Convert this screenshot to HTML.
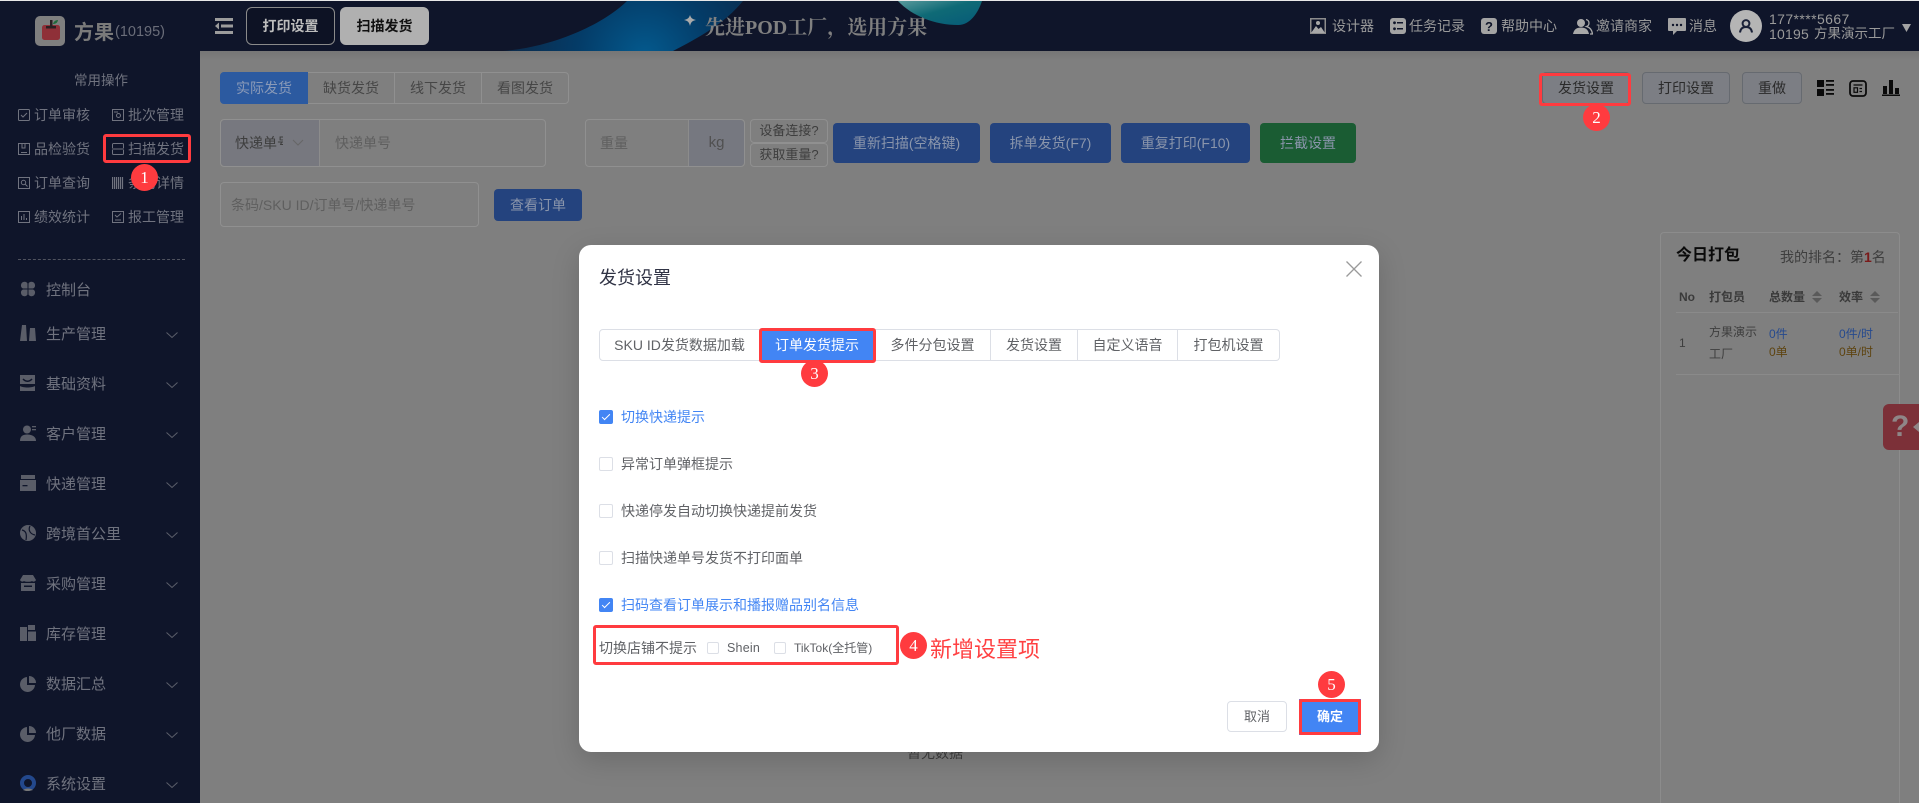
<!DOCTYPE html>
<html lang="zh"><head><meta charset="utf-8"><title>发货设置</title>
<style>
*{box-sizing:border-box}
html,body{margin:0;padding:0;width:1919px;height:803px;overflow:hidden;background:#7f7f7f;font-family:"Liberation Sans","Noto Sans CJK SC",sans-serif}
.a{position:absolute}
.t{position:absolute;white-space:nowrap;line-height:20px;height:20px;font-size:14px}
.c{text-align:center}
.side{color:#70737f}
.tb{top:72px;height:32px;border:1px solid #909090;line-height:30px;text-align:center;font-size:14px;color:#464646;position:absolute}
.bb{position:absolute;top:123px;height:40px;line-height:40px;background:#24437e;color:#8a95ab;border-radius:4px;text-align:center;font-size:14px}
.box{position:absolute;border:1px solid #909090;border-radius:4px}
.rb{position:absolute;top:72px;height:32px;border:1px solid #666a70;border-radius:4px;background:#7c7e84;color:#2a2a2a;text-align:center;line-height:30px;font-size:14px}
.mt{position:absolute;top:329px;height:32px;border:1px solid #dcdfe6;border-left:0;line-height:30px;text-align:center;font-size:14px;color:#606266;background:#fff}
.ck{position:absolute;left:599px;width:14px;height:14px;border:1px solid #dcdfe6;border-radius:2px;background:#fff}
.ck.on{background:#4285f4;border-color:#4285f4}
.ck.on:after{content:"";position:absolute;left:4px;top:1px;width:3px;height:7px;border:solid #fff;border-width:0 1px 1px 0;transform:rotate(45deg)}
.ml{position:absolute;left:621px;font-size:14px;line-height:20px;height:20px;white-space:nowrap;color:#606266}
.badge{position:absolute;width:27px;height:27px;border-radius:50%;background:#ff3b3f;color:#fff;text-align:center;line-height:27px;font-size:17px;font-family:"Liberation Serif",serif;z-index:10}
.red{position:absolute;border:3px solid #ff3b3f;border-radius:3px;z-index:9}
.chev{position:absolute;left:166px;width:12px;height:12px}
svg{position:absolute;display:block}
</style></head><body>

<div class="a" style="left:0;top:0;width:1919px;height:1px;background:#e8e8e8"></div>
<div class="a" style="left:0;top:1px;width:1919px;height:50px;background:#0f152a;overflow:hidden">
<svg width="1919" height="50" style="left:0;top:0">
<defs>
<radialGradient id="g1" gradientUnits="userSpaceOnUse" cx="645" cy="56" r="150"><stop offset="0" stop-color="#045a8e"/><stop offset=".45" stop-color="#043c68"/><stop offset="1" stop-color="#0d2745"/></radialGradient>
<linearGradient id="g2" x1="0" y1="0" x2="1" y2="1"><stop offset="0" stop-color="#5a9a9c"/><stop offset=".45" stop-color="#0f6a76"/><stop offset="1" stop-color="#065a78"/></linearGradient></defs>
<path d="M503 50C555 46 605 22 627 0H743C725 22 700 36 673 50Z" fill="url(#g1)"/>
<path d="M898 0C912 15 935 24 958 24C970 24 978 12 982 0Z" fill="url(#g2)"/>
<path d="M690 14C691 17 692 18 696 19C692 20 691 21 690 25C689 21 688 20 684 19C688 18 689 17 690 14Z" fill="#aaaaaa"/>
</svg>
</div>
<div class="a" style="left:0;top:51px;width:200px;height:752px;background:#0f152a"></div>
<div class="a" style="left:200px;top:51px;width:1719px;height:10px;background:linear-gradient(#767676,#7f7f7f)"></div>

<!-- logo -->
<div class="a" style="left:35px;top:16px;width:30px;height:30px;border-radius:5px;background:#7f7f7f"></div>
<svg width="30" height="30" style="left:35px;top:16px"><rect x="7" y="9" width="18" height="15" rx="2.500" fill="#8f3038"/><rect x="15" y="4" width="2.500" height="8" fill="#2b1f22"/><rect x="11" y="10" width="10" height="2.500" fill="#2b1f22"/><path d="M18 8C18.500 6 20 4 23 4C22.500 7 20.500 8 18 8Z" fill="#1f6a3a"/></svg>
<div class="t" style="left:74px;top:21px;font-size:20px;line-height:24px;height:24px;font-weight:700;color:#7a7a7a">方果</div>
<div class="t" style="left:115px;top:21px;font-size:14.500px;line-height:22px;color:#6a6d79">(10195)</div>

<svg width="18" height="16" style="left:215px;top:18px"><rect x="0" y="0" width="18" height="3" fill="#9c9c9c"/><rect x="6" y="6.500" width="12" height="3" fill="#9c9c9c"/><rect x="0" y="13" width="18" height="3" fill="#9c9c9c"/><path d="M4 4.500L0 8L4 11.500Z" fill="#9c9c9c"/></svg>
<div class="a c" style="left:246px;top:7px;width:89px;height:38px;border:1px solid #8a8a8a;border-radius:6px;background:#0d1224;color:#bdbdbd;font-size:14px;font-weight:700;line-height:36px">打印设置</div>
<div class="a c" style="left:340px;top:7px;width:89px;height:38px;border-radius:6px;background:#b0b0b0;color:#111;font-size:14px;font-weight:700;line-height:38px">扫描发货</div>

<div class="t" style="left:705px;top:14px;height:28px;line-height:28px;font-size:20px;font-weight:700;color:#808080;font-family:'Liberation Serif','Noto Serif CJK SC',serif">先进POD工厂，选用方果</div>

<!-- header right -->
<svg width="16" height="16" style="left:1310px;top:18px"><rect x=".75" y=".75" width="14.500" height="14.500" fill="#0f152a" stroke="#8c8c8c" stroke-width="1.500"/><circle cx="8" cy="5" r="2" fill="#a8a8a8"/><path d="M1 15L6 8L8.500 11L11 9L15 15Z" fill="#a8a8a8"/></svg>
<div class="t" style="left:1332px;top:16px;color:#9a9a9a">设计器</div>
<svg width="16" height="16" style="left:1390px;top:18px"><rect width="16" height="16" rx="3" fill="#a3a3a3"/><rect x="7" y="4" width="6" height="1.500" fill="#0f152a"/><rect x="7" y="10" width="6" height="1.500" fill="#0f152a"/><circle cx="4.500" cy="4.800" r="1.400" fill="#0f152a"/><circle cx="4.500" cy="10.800" r="1.400" fill="#0f152a"/></svg>
<div class="t" style="left:1409px;top:16px;color:#9a9a9a">任务记录</div>
<svg width="16" height="16" style="left:1481px;top:18px"><rect width="16" height="16" rx="3" fill="#a3a3a3"/><text x="8" y="13" font-size="13" font-weight="700" text-anchor="middle" fill="#0f152a" font-family="Liberation Sans">?</text></svg>
<div class="t" style="left:1501px;top:16px;color:#9a9a9a">帮助中心</div>
<svg width="20" height="17" style="left:1573px;top:18px"><circle cx="8" cy="5" r="4" fill="#a8a8a8"/><path d="M0 16C1 11 4 9.500 8 9.500C12 9.500 15 11 16 16Z" fill="#a8a8a8"/><path d="M13 1.500C15 2 16 3.500 16 5C16 6.500 15 8 13.500 8.500C17 9.500 19 12 19.500 16H17" fill="none" stroke="#a8a8a8" stroke-width="1.300"/></svg>
<div class="t" style="left:1596px;top:16px;color:#9a9a9a">邀请商家</div>
<svg width="18" height="17" style="left:1668px;top:18px"><path d="M1 0H17A1 1 0 0 1 18 1V12A1 1 0 0 1 17 13H9L5 17V13H1A1 1 0 0 1 0 12V1A1 1 0 0 1 1 0Z" fill="#a3a3a3"/><circle cx="5" cy="7" r="1.200" fill="#0f152a"/><circle cx="9" cy="7" r="1.200" fill="#0f152a"/><circle cx="13" cy="7" r="1.200" fill="#0f152a"/></svg>
<div class="t" style="left:1689px;top:16px;color:#9a9a9a">消息</div>
<div class="a" style="left:1730px;top:10px;width:32px;height:32px;border-radius:50%;background:#b5b5b5"></div>
<svg width="14" height="14" style="left:1739px;top:19px"><circle cx="7" cy="4.500" r="3.400" fill="none" stroke="#1a2138" stroke-width="2"/><path d="M1 13.500C1.500 9.500 4 8 7 8C10 8 12.500 9.500 13 13.500" fill="none" stroke="#1a2138" stroke-width="2"/></svg>
<div class="t" style="left:1769px;top:9px;color:#9a9a9a;letter-spacing:.4px">177****5667</div>
<div class="t" style="left:1769px;top:24px;color:#9a9a9a;letter-spacing:.2px">10195</div>
<div class="t" style="left:1814px;top:24px;color:#9a9a9a;font-size:13.500px">方果演示工厂</div>
<svg width="9" height="8" style="left:1902px;top:24px"><path d="M0 0H9L4.500 8Z" fill="#a3a3a3"/></svg>

<!-- sidebar quick -->
<div class="t side" style="left:74px;top:71px;font-size:13.500px">常用操作</div>
<svg width="12" height="12" style="left:18px;top:109px"><rect x=".5" y=".5" width="11" height="11" rx="1" fill="none" stroke="#70737f"/><path d="M3 6L5 8L9 4" fill="none" stroke="#70737f"/></svg>
<div class="t side" style="left:34px;top:105px">订单审核</div>
<svg width="12" height="12" style="left:112px;top:109px"><rect x=".5" y=".5" width="11" height="11" fill="none" stroke="#70737f"/><circle cx="6.500" cy="6.500" r="2" fill="none" stroke="#70737f"/><path d="M2 3H6" stroke="#70737f"/></svg>
<div class="t side" style="left:128px;top:105px">批次管理</div>
<svg width="12" height="12" style="left:18px;top:143px"><path d="M.5 .5H11.500V11.500H.5Z" fill="none" stroke="#70737f"/><path d="M4 0V5H7V0M3 9.500H9" fill="none" stroke="#70737f"/></svg>
<div class="t side" style="left:34px;top:139px">品检验货</div>
<svg width="12" height="12" style="left:112px;top:143px"><path d="M.5 5V1.500A1 1 0 0 1 1.500.5H10.500A1 1 0 0 1 11.500 1.500V5M.5 7V10.500A1 1 0 0 0 1.500 11.500H10.500A1 1 0 0 0 11.500 10.500V7M0 6H12" fill="none" stroke="#70737f"/></svg>
<div class="t side" style="left:128px;top:139px">扫描发货</div>
<svg width="12" height="12" style="left:18px;top:177px"><rect x=".5" y=".5" width="11" height="11" fill="none" stroke="#70737f"/><circle cx="5.500" cy="5.500" r="2.200" fill="none" stroke="#70737f"/><path d="M7 7L9.500 9.500" stroke="#70737f"/></svg>
<div class="t side" style="left:34px;top:173px">订单查询</div>
<svg width="12" height="12" style="left:112px;top:177px"><path d="M.5 0V12M2.500 0V12M4.500 0V12M6.500 0V12M8.500 0V12M10.500 0V12" stroke="#70737f" stroke-width="1.200"/></svg>
<div class="t side" style="left:128px;top:173px">条码详情</div>
<svg width="12" height="12" style="left:18px;top:211px"><rect x=".5" y=".5" width="11" height="11" fill="none" stroke="#70737f"/><path d="M3.500 9V5M6 9V3M8.500 9V7" stroke="#70737f"/></svg>
<div class="t side" style="left:34px;top:207px">绩效统计</div>
<svg width="12" height="12" style="left:112px;top:211px"><rect x=".5" y=".5" width="11" height="11" fill="none" stroke="#70737f"/><path d="M3 4L5 6L9 2.500M3 9H9" fill="none" stroke="#70737f"/></svg>
<div class="t side" style="left:128px;top:207px">报工管理</div>
<div class="a" style="left:18px;top:259px;width:167px;border-top:1px dashed #50535f"></div>

<!-- sidebar menu -->
<svg width="16" height="16" style="left:20px;top:281px" fill="#5a5d68"><path d="M1 4A3.500 3.500 0 0 1 7.500 2.500V7.500H3A3 3 0 0 1 1 4Z"/><path d="M15 4A3.500 3.500 0 0 0 8.500 2.500V7.500H13A3 3 0 0 0 15 4Z"/><path d="M1 12A3.500 3.500 0 0 0 7.500 13.500V8.500H3A3 3 0 0 0 1 12Z"/><path d="M15 12A3.500 3.500 0 0 1 8.500 13.500V8.500H13A3 3 0 0 1 15 12Z"/></svg>
<div class="t side" style="left:46px;top:281px;font-size:15px">控制台</div>
<svg width="16" height="16" style="left:20px;top:325px" fill="#5a5d68"><path d="M2 0H6L7 16H0Z"/><path d="M10 3H15L16 16H9Z"/></svg>
<div class="t side" style="left:46px;top:325px;font-size:15px">生产管理</div>
<svg width="16" height="16" style="left:20px;top:375px" fill="#5a5d68"><path d="M0 0H15V9H0Z"/><path d="M0 11C3 13 12 13 15 11V16H0Z"/><path d="M3 4C6 7 9 7 12 4" fill="none" stroke="#0f152a" stroke-width="1.500"/></svg>
<div class="t side" style="left:46px;top:375px;font-size:15px">基础资料</div>
<svg width="16" height="16" style="left:20px;top:425px" fill="#5a5d68"><circle cx="7" cy="4.500" r="4"/><path d="M0 16C0 11 3 9.500 7 9.500C11 9.500 16 11 16 16Z"/><rect x="12" y="1" width="4" height="1.300"/><rect x="12" y="4" width="4" height="1.300"/></svg>
<div class="t side" style="left:46px;top:425px;font-size:15px">客户管理</div>
<svg width="16" height="16" style="left:20px;top:475px" fill="#5a5d68"><rect x="1" y="0" width="14" height="4"/><rect y="5" width="16" height="11"/><rect x="2.500" y="10" width="5" height="1.300" fill="#0f152a"/></svg>
<div class="t side" style="left:46px;top:475px;font-size:15px">快递管理</div>
<svg width="16" height="16" style="left:20px;top:525px"><circle cx="8" cy="8" r="8" fill="#5a5d68"/><path d="M2 5C6 6 7 9 6 15M10 1C8 5 10 9 15 10" fill="none" stroke="#0f152a" stroke-width="1.200"/></svg>
<div class="t side" style="left:46px;top:525px;font-size:15px">跨境首公里</div>
<svg width="16" height="16" style="left:20px;top:575px" fill="#5a5d68"><path d="M3 0H13L16 5C15 7 13 7 12 6C11 7 5 7 4 6C3 7 1 7 0 5Z"/><path d="M1 8H15V16H1Z"/><rect x="4" y="10.500" width="8" height="1.500" fill="#0f152a"/></svg>
<div class="t side" style="left:46px;top:575px;font-size:15px">采购管理</div>
<svg width="16" height="16" style="left:20px;top:625px" fill="#5a5d68"><rect y="2" width="7" height="14"/><rect x="8" y="0" width="7" height="5"/><rect x="8" y="6.500" width="8" height="9.500"/></svg>
<div class="t side" style="left:46px;top:625px;font-size:15px">库存管理</div>
<svg width="16" height="16" style="left:20px;top:676px" fill="#5a5d68"><path d="M7 1A7.500 7.500 0 1 0 15 9H7Z"/><path d="M9 0A7 7 0 0 1 16 7H9Z"/></svg>
<div class="t side" style="left:46px;top:675px;font-size:15px">数据汇总</div>
<svg width="16" height="16" style="left:20px;top:726px" fill="#5a5d68"><path d="M7 1A7.500 7.500 0 1 0 15 9H7Z"/><path d="M9 0A7 7 0 0 1 16 7H9Z"/></svg>
<div class="t side" style="left:46px;top:725px;font-size:15px">他厂数据</div>
<svg width="16" height="16" style="left:20px;top:775px"><circle cx="8" cy="8" r="6" fill="none" stroke="#23488c" stroke-width="4"/><path d="M3 15C6 13 10 13 13 15L9 16H6Z" fill="#777"/></svg>
<div class="t side" style="left:46px;top:775px;font-size:15px">系统设置</div>

<svg class="chev" viewBox="0 0 12 12" style="top:329px"><path d="M.5 3.500L6 8.500L11.500 3.500" fill="none" stroke="#5b5e6a"/></svg>
<svg class="chev" viewBox="0 0 12 12" style="top:379px"><path d="M.5 3.500L6 8.500L11.500 3.500" fill="none" stroke="#5b5e6a"/></svg>
<svg class="chev" viewBox="0 0 12 12" style="top:429px"><path d="M.5 3.500L6 8.500L11.500 3.500" fill="none" stroke="#5b5e6a"/></svg>
<svg class="chev" viewBox="0 0 12 12" style="top:479px"><path d="M.5 3.500L6 8.500L11.500 3.500" fill="none" stroke="#5b5e6a"/></svg>
<svg class="chev" viewBox="0 0 12 12" style="top:529px"><path d="M.5 3.500L6 8.500L11.500 3.500" fill="none" stroke="#5b5e6a"/></svg>
<svg class="chev" viewBox="0 0 12 12" style="top:579px"><path d="M.5 3.500L6 8.500L11.500 3.500" fill="none" stroke="#5b5e6a"/></svg>
<svg class="chev" viewBox="0 0 12 12" style="top:629px"><path d="M.5 3.500L6 8.500L11.500 3.500" fill="none" stroke="#5b5e6a"/></svg>
<svg class="chev" viewBox="0 0 12 12" style="top:679px"><path d="M.5 3.500L6 8.500L11.500 3.500" fill="none" stroke="#5b5e6a"/></svg>
<svg class="chev" viewBox="0 0 12 12" style="top:729px"><path d="M.5 3.500L6 8.500L11.500 3.500" fill="none" stroke="#5b5e6a"/></svg>
<svg class="chev" viewBox="0 0 12 12" style="top:779px"><path d="M.5 3.500L6 8.500L11.500 3.500" fill="none" stroke="#5b5e6a"/></svg>

<!-- content tabs -->
<div class="tb" style="left:220px;width:88px;background:#2c5aa0;border-color:#2c5aa0;color:#8a9ab8;border-radius:4px 0 0 4px">实际发货</div>
<div class="tb" style="left:308px;width:87px;border-left:0">缺货发货</div>
<div class="tb" style="left:395px;width:87px;border-left:0">线下发货</div>
<div class="tb" style="left:481px;width:88px;border-radius:0 4px 4px 0">看图发货</div>

<!-- row 2 -->
<div class="box" style="left:220px;top:119px;width:326px;height:48px"></div>
<div class="a" style="left:221px;top:120px;width:99px;height:46px;background:#77787f;border-right:1px solid #8c8c8c;border-radius:4px 0 0 4px"></div>
<div class="t" style="left:235px;top:133px;width:48px;overflow:hidden;color:#3e3e3e">快递单号</div>
<svg width="12" height="8" style="left:292px;top:139px"><path d="M1 1L6 6L11 1" fill="none" stroke="#666"/></svg>
<div class="t" style="left:335px;top:133px;color:#5f5f5f">快递单号</div>
<div class="box" style="left:585px;top:119px;width:160px;height:48px"></div>
<div class="a" style="left:688px;top:120px;width:56px;height:46px;background:#767880;border-left:1px solid #8c8c8c;border-radius:0 4px 4px 0"></div>
<div class="t" style="left:600px;top:133px;color:#5f5f5f">重量</div>
<div class="t c" style="left:689px;top:133px;width:55px;color:#505050;font-size:15px">kg</div>
<div class="box c" style="left:750px;top:119px;width:78px;height:24px;line-height:22px;font-size:13px;color:#3e3e3e">设备连接?</div>
<div class="box c" style="left:750px;top:143px;width:78px;height:24px;line-height:22px;font-size:13px;color:#3e3e3e">获取重量?</div>
<div class="bb" style="left:833px;width:147px">重新扫描(空格键)</div>
<div class="bb" style="left:990px;width:121px">拆单发货(F7)</div>
<div class="bb" style="left:1121px;width:129px">重复打印(F10)</div>
<div class="bb" style="left:1260px;width:96px;background:#1a5c33">拦截设置</div>

<!-- row 3 -->
<div class="box" style="left:220px;top:182px;width:259px;height:45px"></div>
<div class="t" style="left:231px;top:195px;color:#5f5f5f">条码/SKU ID/订单号/快递单号</div>
<div class="a c" style="left:494px;top:189px;width:88px;height:32px;background:#24437e;border-radius:4px;color:#8a95ab;font-size:14px;line-height:32px">查看订单</div>

<!-- right buttons -->
<div class="rb" style="left:1542px;width:88px">发货设置</div>
<div class="rb" style="left:1642px;width:88px">打印设置</div>
<div class="rb" style="left:1742px;width:60px">重做</div>
<svg width="17" height="16" style="left:1817px;top:80px" fill="#0a0a0a"><rect width="7" height="7"/><rect y="9" width="7" height="7"/><rect x="9" y="0" width="8" height="1.800"/><rect x="9" y="4" width="8" height="1.800"/><rect x="9" y="9" width="8" height="1.800"/><rect x="9" y="13" width="8" height="1.800"/></svg>
<svg width="18" height="17" style="left:1849px;top:80px"><rect x="1" y="1" width="16" height="15" rx="3" fill="none" stroke="#0a0a0a" stroke-width="1.800"/><path d="M4.500 5H13.500" stroke="#0a0a0a" stroke-width="1.300"/><rect x="5" y="7.800" width="3.500" height="4.500" fill="none" stroke="#0a0a0a" stroke-width="1.200"/><path d="M10.500 8.500H13M10.500 11.500H13" stroke="#0a0a0a" stroke-width="1.200"/></svg>
<svg width="18" height="16" style="left:1882px;top:80px" fill="#0a0a0a"><rect x="1" y="6" width="4" height="8"/><rect x="7" y="0" width="4" height="14"/><rect x="13" y="8" width="4" height="6"/><rect y="14.500" width="18" height="1.500"/></svg>

<!-- today panel -->
<div class="a" style="left:1660px;top:232px;width:240px;height:571px;border:1px solid #8c8c8c;border-bottom:0;border-radius:4px 4px 0 0"></div>
<div class="t" style="left:1676px;top:246px;font-size:16px;font-weight:700;color:#0a0a0a">今日打包</div>
<div class="t" style="left:1780px;top:247px;color:#3e3e3e">我的排名：第<b style="color:#7a1a1a">1</b>名</div>
<div class="t" style="left:1679px;top:287px;font-size:12px;font-weight:700;color:#3a3a3a">No</div>
<div class="t" style="left:1709px;top:287px;font-size:12px;font-weight:700;color:#3a3a3a">打包员</div>
<div class="t" style="left:1769px;top:287px;font-size:12px;font-weight:700;color:#3a3a3a">总数量</div>
<div class="t" style="left:1839px;top:287px;font-size:12px;font-weight:700;color:#3a3a3a">效率</div>
<svg width="10" height="12" style="left:1812px;top:291px" fill="#5a5a5a"><path d="M0 5L5 0L10 5Z"/><path d="M0 7L5 12L10 7Z"/></svg>
<svg width="10" height="12" style="left:1870px;top:291px" fill="#5a5a5a"><path d="M0 5L5 0L10 5Z"/><path d="M0 7L5 12L10 7Z"/></svg>
<div class="a" style="left:1676px;top:312px;width:222px;border-top:1px solid #8a8a8a"></div>
<div class="t" style="left:1679px;top:333px;font-size:12px;color:#3e3e3e">1</div>
<div class="t" style="left:1709px;top:322px;font-size:12px;color:#3e3e3e">方果演示</div>
<div class="t" style="left:1709px;top:344px;font-size:12px;color:#3e3e3e">工厂</div>
<div class="t" style="left:1769px;top:324px;font-size:12px;color:#264a8e">0件</div>
<div class="t" style="left:1769px;top:342px;font-size:12px;color:#5e4410">0单</div>
<div class="t" style="left:1839px;top:324px;font-size:12px;color:#264a8e">0件/时</div>
<div class="t" style="left:1839px;top:342px;font-size:12px;color:#5e4410">0单/时</div>
<div class="a" style="left:1676px;top:374px;width:224px;border-top:1px solid #8a8a8a"></div>

<!-- red tab -->
<div class="a" style="left:1883px;top:404px;width:36px;height:46px;background:#7c3038;border-radius:6px 0 0 6px;overflow:hidden">
<div style="position:absolute;left:8px;top:5px;font-size:30px;font-weight:700;line-height:36px;color:#8f8687">?</div>
<svg width="6" height="10" style="left:30px;top:18px"><path d="M6 0L0 5L6 10Z" fill="#8f8687"/></svg>
</div>

<div class="t" style="left:907px;top:743px;color:#3e3e3e">暂无数据</div>

<!-- modal -->
<div class="a" style="left:579px;top:245px;width:800px;height:507px;background:#fff;border-radius:12px;box-shadow:0 8px 28px rgba(0,0,0,.16)"></div>
<div class="t" style="left:599px;top:266px;font-size:18px;line-height:24px;height:24px;color:#303345">发货设置</div>
<svg width="16" height="16" style="left:1346px;top:261px"><path d="M.5 .5L15.500 15.500M15.500 .5L.5 15.500" stroke="#9a9a9a" stroke-width="1.300"/></svg>

<div class="mt" style="left:599px;width:161px;border-left:1px solid #dcdfe6;border-radius:4px 0 0 4px">SKU ID发货数据加载</div>
<div class="mt" style="left:760px;width:115px;background:#4285f4;border-color:#4285f4;color:#fff">订单发货提示</div>
<div class="mt" style="left:875px;width:116px">多件分包设置</div>
<div class="mt" style="left:991px;width:87px">发货设置</div>
<div class="mt" style="left:1078px;width:100px">自定义语音</div>
<div class="mt" style="left:1178px;width:102px;border-radius:0 4px 4px 0">打包机设置</div>
<div class="red" style="left:759px;top:328px;width:117px;height:35px"></div>

<div class="ck on" style="top:410px"></div><div class="ml" style="top:407px;color:#4285f4">切换快递提示</div>
<div class="ck" style="top:457px"></div><div class="ml" style="top:454px">异常订单弹框提示</div>
<div class="ck" style="top:504px"></div><div class="ml" style="top:501px">快递停发自动切换快递提前发货</div>
<div class="ck" style="top:551px"></div><div class="ml" style="top:548px">扫描快递单号发货不打印面单</div>
<div class="ck on" style="top:598px"></div><div class="ml" style="top:595px;color:#4285f4">扫码查看订单展示和播报赠品别名信息</div>

<div class="t" style="left:599px;top:638px;color:#606266">切换店铺不提示</div>
<div class="ck" style="left:707px;top:642px;width:12px;height:12px"></div>
<div class="t" style="left:727px;top:638px;font-size:12.500px;letter-spacing:.2px;color:#606266">Shein</div>
<div class="ck" style="left:774px;top:642px;width:12px;height:12px"></div>
<div class="t" style="left:794px;top:638px;font-size:12px;color:#606266">TikTok(全托管)</div>
<div class="red" style="left:593px;top:625px;width:306px;height:40px"></div>
<div class="t" style="left:930px;top:635px;font-size:22px;line-height:30px;height:30px;color:#ff4042">新增设置项</div>

<div class="a c" style="left:1227px;top:701px;width:60px;height:31px;border:1px solid #dcdfe6;border-radius:4px;color:#606266;font-size:13px;line-height:29px">取消</div>
<div class="a c" style="left:1299px;top:699px;width:62px;height:36px;background:#4285f4;color:#fff;font-size:13px;font-weight:700;line-height:36px">确定</div>
<div class="red" style="left:1299px;top:699px;width:62px;height:36px;border-radius:2px"></div>

<!-- annotations -->
<div class="red" style="left:103px;top:134px;width:88px;height:29px"></div>
<div class="red" style="left:1539px;top:73px;width:92px;height:33px"></div>
<div class="badge" style="left:131px;top:164px">1</div>
<div class="badge" style="left:1583px;top:104px">2</div>
<div class="badge" style="left:801px;top:360px">3</div>
<div class="badge" style="left:900px;top:632px">4</div>
<div class="badge" style="left:1318px;top:671px">5</div>

</body></html>
